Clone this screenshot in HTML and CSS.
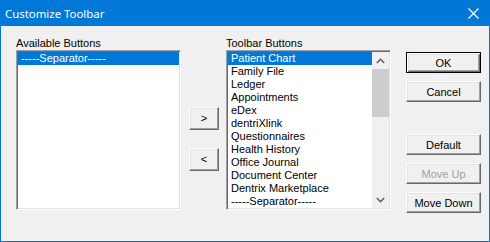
FILE: index.html
```html
<!DOCTYPE html>
<html lang="en">
<head>
    <meta charset="UTF-8">
    <title>Customize Toolbar</title>
    <link rel="stylesheet" href="styles.css">
</head>
<body>
    <div class="window">
        <div class="titlebar">
            <span class="title">Customize Toolbar</span>
            <svg class="close" width="11" height="11" viewBox="0 0 11 11">
                <path d="M0.5 0.5 L10.5 10.5 M10.5 0.5 L0.5 10.5" stroke="#fff" stroke-width="1.2" fill="none"/>
            </svg>
        </div>

        <div class="content">
            <div class="list-col">
                <div class="label">Available Buttons</div>
                <div class="listbox">
                    <div class="items">
                        <div class="item selected">-----Separator-----</div>
                    </div>
                </div>
            </div>

            <div class="move-col">
                <button class="btn arrow">&gt;</button>
                <button class="btn arrow">&lt;</button>
            </div>

            <div class="list-col">
                <div class="label">Toolbar Buttons</div>
                <div class="listbox">
                    <div class="items">
                        <div class="item selected">Patient Chart</div>
                        <div class="item">Family File</div>
                        <div class="item">Ledger</div>
                        <div class="item">Appointments</div>
                        <div class="item">eDex</div>
                        <div class="item">dentriXlink</div>
                        <div class="item">Questionnaires</div>
                        <div class="item">Health History</div>
                        <div class="item">Office Journal</div>
                        <div class="item">Document Center</div>
                        <div class="item">Dentrix Marketplace</div>
                        <div class="item">-----Separator-----</div>
                    </div>
                    <div class="scrollbar">
                        <div class="scroll-btn">
                            <svg width="9" height="6" viewBox="0 0 9 6"><polyline points="0.8,5 4.5,1.3 8.2,5" stroke="#606060" stroke-width="1.6" fill="none"/></svg>
                        </div>
                        <div class="track"><div class="thumb"></div></div>
                        <div class="scroll-btn">
                            <svg width="9" height="6" viewBox="0 0 9 6"><polyline points="0.8,1 4.5,4.7 8.2,1" stroke="#606060" stroke-width="1.6" fill="none"/></svg>
                        </div>
                    </div>
                </div>
            </div>

            <div class="action-col">
                <button class="btn default">OK</button>
                <button class="btn">Cancel</button>
                <button class="btn spaced">Default</button>
                <button class="btn" disabled>Move Up</button>
                <button class="btn">Move Down</button>
            </div>
        </div>
    </div>
</body>
</html>
```

FILE: styles.css
```css
* {
    margin: 0;
    padding: 0;
    box-sizing: border-box;
}

body {
    width: 490px;
    height: 242px;
    background-color: #f0f0f0;
    font-family: 'Liberation Sans', Arial, sans-serif;
    font-size: 11px;
    color: #000;
}

.window {
    width: 490px;
    height: 242px;
    border: 1px solid #0078d7;
    background-color: #f0f0f0;
}

.titlebar {
    height: 25px;
    background-color: #0078d7;
    display: flex;
    align-items: center;
    justify-content: space-between;
    padding: 0 10px 1px 4px;
}

.title {
    color: #fff;
    font-family: 'Noto Sans', sans-serif;
    font-size: 11.4px;
}

.close {
    margin-top: 1px;
}

.content {
    display: flex;
    padding: 10px 0 0 15px;
}

.label {
    height: 14px;
    line-height: 14px;
}

/* sunken list box */
.listbox {
    width: 165px;
    height: 160px;
    background-color: #fff;
    border: 1px solid;
    border-color: #a0a0a0 #fff #fff #a0a0a0;
    box-shadow: inset 1px 1px #696969, inset -1px -1px #e3e3e3;
    padding: 1px;
    display: flex;
}

.items {
    flex: 1;
}

.item {
    height: 13px;
    line-height: 13px;
    padding-left: 3px;
    white-space: nowrap;
}

.item.selected {
    background-color: #0078d7;
    color: #fff;
}

.scrollbar {
    width: 17px;
    background-color: #f0f0f0;
    display: flex;
    flex-direction: column;
}

.scroll-btn {
    height: 17px;
    display: flex;
    align-items: center;
    justify-content: center;
}

.track {
    flex: 1;
}

.thumb {
    height: 48px;
    background-color: #cdcdcd;
}

/* raised buttons */
.btn {
    display: block;
    width: 75px;
    height: 21px;
    background-color: #f0f0f0;
    border: 1px solid;
    border-color: #fff #696969 #696969 #fff;
    box-shadow: inset -1px -1px #a0a0a0, inset 1px 1px #e3e3e3;
    font-family: 'Liberation Sans', Arial, sans-serif;
    font-size: 11px;
    color: #000;
    text-align: center;
}

.btn.default {
    border: 1px solid #000;
    box-shadow: inset 1px 1px #fff, inset -1px -1px #696969, inset 2px 2px #e3e3e3, inset -2px -2px #a0a0a0;
}

.btn:disabled {
    color: #a0a0a0;
}

.move-col {
    display: flex;
    flex-direction: column;
    gap: 18px;
    padding-top: 71px;
    margin: 0 7px 0 8px;
}

.btn.arrow {
    width: 30px;
    height: 23px;
    padding-bottom: 2px;
}

.action-col {
    display: flex;
    flex-direction: column;
    gap: 8px;
    padding-top: 16px;
    margin-left: 15px;
}

.btn.spaced {
    margin-top: 24px;
}
```
